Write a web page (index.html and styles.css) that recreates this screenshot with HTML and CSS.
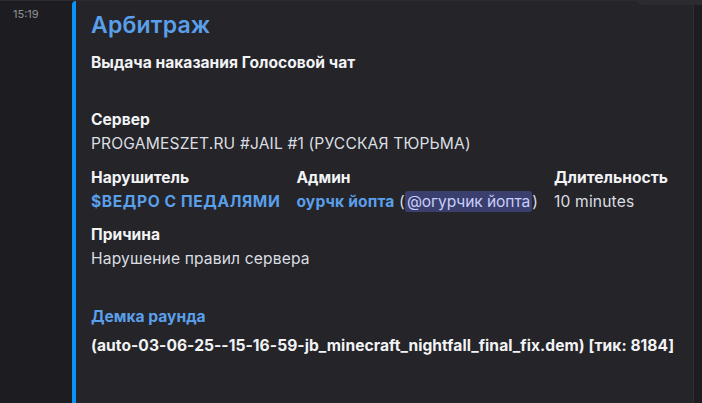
FILE: index.html
```html
<!DOCTYPE html>
<html lang="ru">
<head>
<meta charset="utf-8">
<link rel="stylesheet" href="styles.css">
</head>
<body>
<div class="topbar"></div>
<div class="toppop"></div>
<div class="scrolltrack"></div>
<div class="message">
  <div class="time">15:19</div>
  <div class="embed">
    <div class="title">Арбитраж</div>
    <div class="desc">Выдача наказания Голосовой чат</div>
    <div class="field first">
      <div class="fname">Сервер</div>
      <div class="fvalue">PROGAMESZET.RU #JAIL #1 (РУССКАЯ ТЮРЬМА)</div>
    </div>
    <div class="inline-row">
      <div class="field">
        <div class="fname">Нарушитель</div>
        <div class="fvalue"><span class="link caps">$ВЕДРО С ПЕДАЛЯМИ</span></div>
      </div>
      <div class="field">
        <div class="fname">Админ</div>
        <div class="fvalue"><span class="link">оурчк йопта</span> (<span class="mention">@огурчик йопта</span>)</div>
      </div>
      <div class="field">
        <div class="fname">Длительность</div>
        <div class="fvalue">10 minutes</div>
      </div>
    </div>
    <div class="field next">
      <div class="fname">Причина</div>
      <div class="fvalue">Нарушение правил сервера</div>
    </div>
    <div class="demo">
      <div class="demo-title">Демка раунда</div>
      <div class="demo-file">(auto-03-06-25--15-16-59-jb_minecraft_nightfall_final_fix.dem) [тик: 8184]</div>
    </div>
  </div>
</div>
</body>
</html>
```
FILE: styles.css
```css
html, body {
  margin: 0;
  padding: 0;
}
body {
  background: #1d1d21;
  font-family: Inter, "Noto Sans", "Liberation Sans", sans-serif;
  color: #dbdee1;
  width: 702px;
  height: 403px;
  overflow: hidden;
  position: relative;
}
.topbar {
  position: absolute;
  left: 0;
  top: 0;
  width: 702px;
  height: 1px;
  background: #2b2b30;
}
.toppop {
  position: absolute;
  left: 637px;
  top: 0;
  width: 65px;
  height: 5px;
  background: #2b2b30;
  border-bottom-left-radius: 5px;
}
.scrolltrack {
  position: absolute;
  left: 693px;
  top: 5px;
  width: 1px;
  height: 398px;
  background: #2e2e34;
}
.message {
  display: flex;
  padding-top: 1px;
}
.time {
  width: 72px;
  box-sizing: border-box;
  padding: 5px 0 0 13px;
  font-size: 11px;
  line-height: 16px;
  color: #8e9297;
}
.embed {
  width: 621px;
  height: 420px;
  box-sizing: border-box;
  background: #242429;
  border-left: 4px solid #0a93fb;
  border-radius: 4px 0 0 4px;
  padding: 10px 16px 16px 15px;
}
.title {
  font-size: 23px;
  line-height: 28px;
  font-weight: 600;
  letter-spacing: 0.2px;
  color: #5a9fea;
}
.desc {
  margin-top: 14px;
  font-size: 15.6px;
  line-height: 20px;
  font-weight: 700;
  color: #f2f3f5;
}
.field.first {
  margin-top: 37px;
}
.field.next {
  margin-top: 13px;
}
.fname {
  font-size: 15.6px;
  line-height: 20px;
  font-weight: 700;
  color: #f2f3f5;
  margin-bottom: 4px;
}
.fvalue {
  font-size: 15.6px;
  line-height: 20px;
  letter-spacing: 0.15px;
  color: #dbdee1;
  white-space: nowrap;
}
.inline-row {
  display: flex;
  gap: 16px;
  margin-top: 14px;
}
.link {
  color: #5a9fea;
  font-weight: 700;
}
.link.caps {
  letter-spacing: 0.6px;
}
.mention {
  background: #3a3f6e;
  color: #c9cdfb;
  border-radius: 3px;
  padding: 1px 2px;
  letter-spacing: -0.1px;
}
.demo {
  margin-top: 38px;
}
.demo-title {
  font-size: 15.6px;
  line-height: 20px;
  font-weight: 700;
  color: #5a9fea;
}
.demo-file {
  margin-top: 9px;
  font-size: 15.6px;
  line-height: 20px;
  font-weight: 700;
  letter-spacing: 0.05px;
  color: #f2f3f5;
  white-space: nowrap;
}
```
